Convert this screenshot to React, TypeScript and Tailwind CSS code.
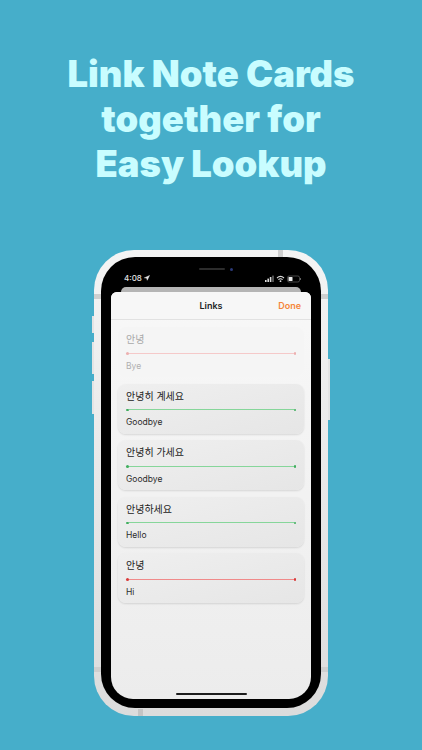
import { Navigation } from "lucide-react";

const cards = [
  { ko: "안녕히 계세요", en: "Goodbye", line: "bg-[#86d69a]", dot: "bg-[#3fae5e]" },
  { ko: "안녕히 가세요", en: "Goodbye", line: "bg-[#86d69a]", dot: "bg-[#3fae5e]" },
  { ko: "안녕하세요", en: "Hello", line: "bg-[#86d69a]", dot: "bg-[#3fae5e]" },
  { ko: "안녕", en: "Hi", line: "bg-[#f08a8a]", dot: "bg-[#d93a3a]" },
];

function Rule({ line, dot }: { line: string; dot: string }) {
  return (
    <div className="flex items-center">
      <div className={`w-[2.5px] h-[2.5px] rounded-full ${dot}`} />
      <div className={`flex-1 h-px ${line}`} />
      <div className={`w-[2.5px] h-[2.5px] rounded-full ${dot}`} />
    </div>
  );
}

function NoteCard({ ko, en, line, dot }: { ko: string; en: string; line: string; dot: string }) {
  return (
    <div className="h-[50px] rounded-[8px] bg-gradient-to-br from-[#efefef] to-[#e6e6e6] shadow-[0_1px_2px_rgba(0,0,0,0.12)] px-[8px] flex flex-col">
      <div className="h-[25px] pt-[5px] text-[10px] leading-[15px] text-[#222]">{ko}</div>
      <Rule line={line} dot={dot} />
      <div className="pt-[5px] text-[8.5px] leading-[12px] text-[#2b2b2b]">{en}</div>
    </div>
  );
}

function StatusIcons() {
  return (
    <svg width="36" height="8" viewBox="0 0 36 8" fill="none">
      <rect x="0" y="5" width="1.6" height="2" fill="#ddd" />
      <rect x="2.4" y="3.6" width="1.6" height="3.4" fill="#ddd" />
      <rect x="4.8" y="2" width="1.6" height="5" fill="#ddd" />
      <rect x="7.2" y="0.6" width="1.6" height="6.4" fill="#666" />
      <path d="M12 3 Q15.5 -0.2 19 3 M13.4 4.6 Q15.5 2.8 17.6 4.6" stroke="#ddd" strokeWidth="1.1" />
      <circle cx="15.5" cy="6.2" r="0.9" fill="#ddd" />
      <rect x="22.5" y="1" width="12" height="6" rx="1.6" stroke="#777" strokeWidth="0.6" />
      <rect x="23.5" y="2" width="4" height="4" rx="0.6" fill="#eee" />
      <rect x="35" y="3" width="0.8" height="2" fill="#777" />
    </svg>
  );
}

export default function App() {
  return (
    <main className="w-[422px] h-[750px] overflow-hidden bg-[#46aeca] flex flex-col items-center font-['Inter','Noto_Sans_CJK_KR',sans-serif]">
      <h1 className="mt-[52px] text-[36.4px] leading-[45px] font-black text-center text-[#c9fdff]">
        Link Note Cards
        <br />
        together for
        <br />
        Easy Lookup
      </h1>

      <div className="relative mt-[63px] w-[234px] h-[466px] rounded-[40px] bg-gradient-to-b from-[#f4f4f4] to-[#dcdcdc] p-[7px]">
        {/* side buttons */}
        <div className="absolute left-[-2px] top-[66px] w-[2px] h-[17px] bg-[#e4e4e4]" />
        <div className="absolute left-[-2px] top-[92px] w-[2px] h-[32px] bg-[#e4e4e4]" />
        <div className="absolute left-[-2px] top-[131px] w-[2px] h-[33px] bg-[#e4e4e4]" />
        <div className="absolute right-[-2px] top-[109px] w-[2px] h-[61px] bg-[#e4e4e4]" />
        {/* antenna bands */}
        <div className="absolute top-0 left-[184px] w-[5px] h-[7px] bg-[#cfcfcf]" />
        <div className="absolute bottom-0 left-[44px] w-[5px] h-[7px] bg-[#c4c4c4]" />
        <div className="absolute left-0 top-[44px] w-[7px] h-[5px] bg-[#cfcfcf]" />
        <div className="absolute right-0 top-[44px] w-[7px] h-[5px] bg-[#cfcfcf]" />
        <div className="absolute left-0 bottom-[44px] w-[7px] h-[5px] bg-[#cfcfcf]" />
        <div className="absolute right-0 bottom-[44px] w-[7px] h-[5px] bg-[#cfcfcf]" />

        <div className="relative w-[220px] h-[451px] rounded-[34px] bg-black px-[10px] pb-[9px] flex flex-col">
          {/* notch speaker and camera */}
          <div className="absolute top-[11px] left-[98px] w-[26px] h-[2px] rounded-full bg-[#2c2c2c]" />
          <div className="absolute top-[11px] left-[129px] w-[3px] h-[3px] rounded-full bg-[#2b3a78]" />

          <div className="h-[27px] shrink-0 flex items-end justify-between px-[13px] pb-[1px]">
            <div className="flex items-center gap-[2px] text-[8px] leading-[10px] font-medium text-[#e4e4e4]">
              4:08
              <Navigation size={6} className="text-[#e4e4e4] fill-[#e4e4e4]" />
            </div>
            <div className="-mr-[3px]">
              <StatusIcons />
            </div>
          </div>

          {/* sheet behind */}
          <div className="shrink-0 mt-[3px] mx-[10px] h-[5px] rounded-t-[5px] bg-[#b5b5b5]" />

          <div className="flex-1 rounded-t-[6px] rounded-b-[22px] bg-gradient-to-b from-[#f8f8f8] to-[#ececec] flex flex-col overflow-hidden">
            <div className="h-[28px] shrink-0 relative flex items-center justify-center bg-[#f7f7f7] border-b border-[#e2e2e2]">
              <span className="text-[9px] font-semibold text-[#222]">Links</span>
              <span className="absolute right-[10px] text-[9px] font-semibold text-[#f5863a]">Done</span>
            </div>

            <div className="flex-1 px-[7px] pt-[7px] flex flex-col gap-[6.5px]">
              <div className="h-[50px] rounded-[8px] bg-[#f5f5f5] px-[8px] flex flex-col">
                <div className="h-[25px] pt-[5px] text-[10px] leading-[15px] text-[#a8a8a8]">안녕</div>
                <Rule line="bg-[#f5c9c9]" dot="bg-[#ecb0b0]" />
                <div className="pt-[5px] text-[8.5px] leading-[12px] text-[#b0b0b0]">Bye</div>
              </div>
              {cards.map((c) => (
                <NoteCard key={c.ko} {...c} />
              ))}
            </div>

            <div className="shrink-0 h-[6px] flex justify-center">
              <div className="w-[71px] h-[2px] rounded-full bg-[#1c1c1c]" />
            </div>
          </div>
        </div>
      </div>
    </main>
  );
}
